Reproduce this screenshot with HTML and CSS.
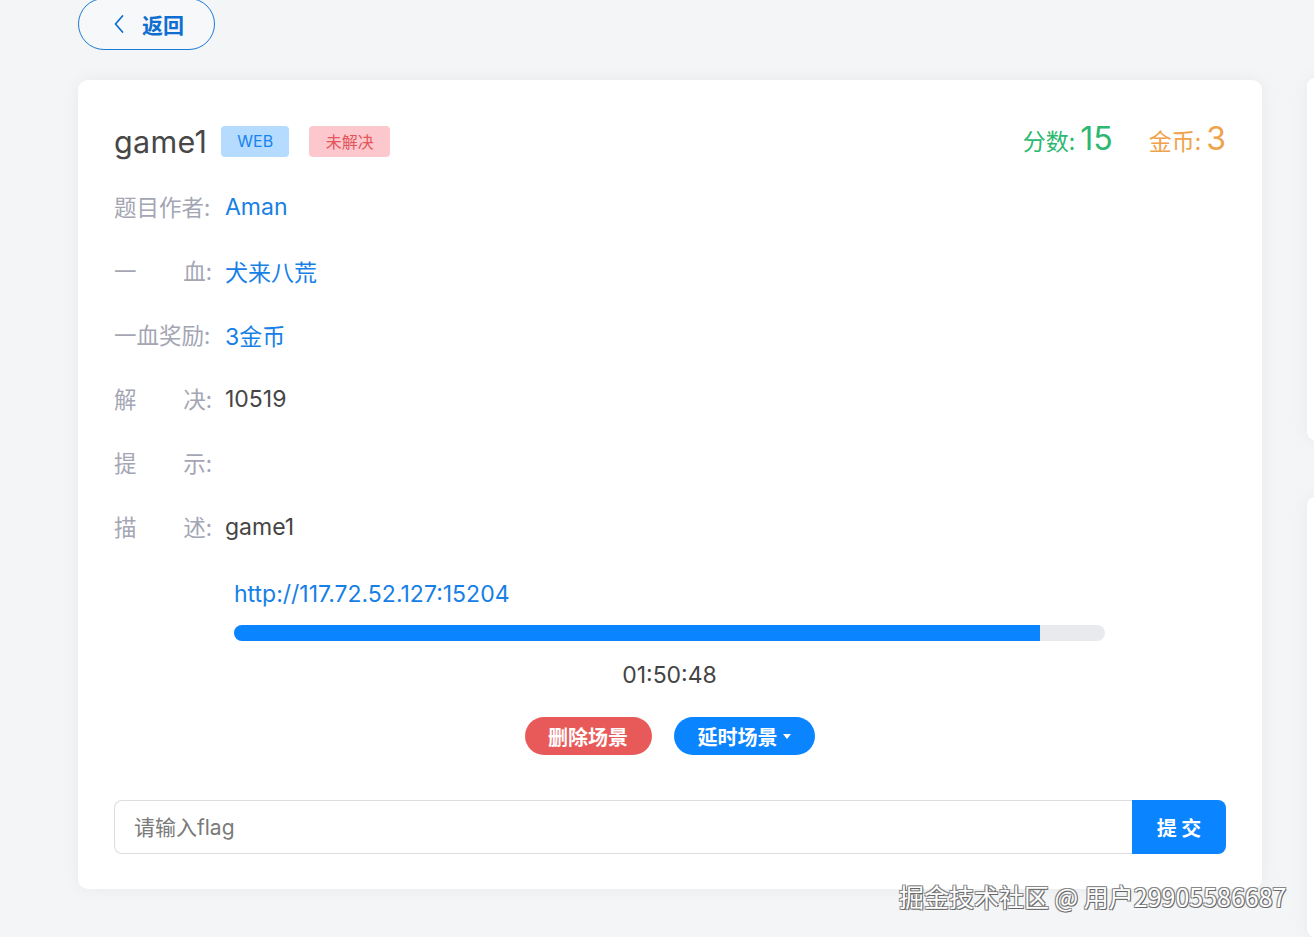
FILE: index.html
```html
<!DOCTYPE html>
<html lang="zh-CN">
<head>
<meta charset="utf-8">
<title>game1</title>
<link rel="stylesheet" href="styles.css">
</head>
<body>
<div class="page">
  <main class="main">
    <button class="back-btn" type="button">
      <svg class="chev" width="12" height="20" viewBox="0 0 12 20"><path d="M9.5 2 L2.5 10 L9.5 18" fill="none" stroke="currentColor" stroke-width="1.8" stroke-linecap="round" stroke-linejoin="round"/></svg>
      <span>返回</span>
    </button>
    <section class="card">
      <div class="head">
        <div class="title-wrap">
          <h1 class="title">game1</h1>
          <span class="tag tag-web">WEB</span>
          <span class="tag tag-unsolved">未解决</span>
        </div>
        <div class="stats">
          <span class="score">分数: <b>15</b></span>
          <span class="coin">金币: <b>3</b></span>
        </div>
      </div>
      <div class="row first"><span class="label"><span>题目作者:</span></span><span class="val blue">Aman</span></div>
      <div class="row"><span class="label"><span>一</span><span>血:</span></span><span class="val blue">犬来八荒</span></div>
      <div class="row"><span class="label"><span>一血奖励:</span></span><span class="val blue">3金币</span></div>
      <div class="row"><span class="label"><span>解</span><span>决:</span></span><span class="val">10519</span></div>
      <div class="row"><span class="label"><span>提</span><span>示:</span></span><span class="val"></span></div>
      <div class="row"><span class="label"><span>描</span><span>述:</span></span><span class="val">game1</span></div>
      <div class="scene">
        <a class="url" href="#">http://117.72.52.127:15204</a>
        <div class="bar"><div class="fill" style="width:92.5%"></div></div>
        <div class="time">01:50:48</div>
        <div class="actions">
          <button class="pill red" type="button">删除场景</button>
          <button class="pill blue-btn" type="button">延时场景<span class="caret"></span></button>
        </div>
      </div>
      <div class="submit">
        <input class="flag" type="text" placeholder="请输入flag">
        <button class="submit-btn" type="button">提 交</button>
      </div>
    </section>
  </main>
  <aside class="side">
    <div class="side-card one"></div>
    <div class="side-card two"></div>
  </aside>
</div>
<div class="watermark">掘金技术社区 @ 用户29905586687</div>
</body>
</html>
```

FILE: styles.css
```css
* { box-sizing: border-box; }
html, body { height: 100%; }
body {
  margin: 0;
  background: #f4f5f7;
  font-family: Inter, "Noto Sans", "Noto Sans CJK SC", sans-serif;
  color: #444;
  overflow: hidden;
}
.page {
  display: flex;
  gap: 45px;
  padding-left: 78px;
  height: 100%;
}
.main {
  width: 1184px;
  flex: none;
}
.back-btn {
  margin-top: -2px;
  width: 137px;
  height: 52px;
  border: 1px solid #1a7ad6;
  border-radius: 26px;
  background: #f7f8fa;
  color: #0f6fd1;
  display: flex;
  align-items: center;
  padding: 0 0 0 34px;
  gap: 17px;
  font-family: "Noto Sans CJK SC", sans-serif;
  font-size: 21px;
  font-weight: 700;
}
.chev { flex: none; }
.card {
  margin-top: 30px;
  background: #fff;
  border-radius: 10px;
  box-shadow: 0 0 18px rgba(0,0,0,0.05);
  padding: 41px 36px 35px;
}
.head {
  display: flex;
  justify-content: space-between;
  align-items: center;
  height: 40px;
}
.title-wrap { display: flex; align-items: center; }
.title {
  margin: 0 14px 0 0;
  font-size: 30.5px;
  font-weight: 400;
  color: #474747;
  letter-spacing: 0.3px;
}
.tag {
  height: 31px;
  line-height: 31px;
  border-radius: 4px;
  font-size: 16px;
  text-align: center;
}
.tag-web { width: 68px; background: #b5dbff; color: #1583f0; margin-right: 20px; }
.tag-unsolved { width: 81px; background: #fcc8cd; color: #e4545a; font-family: "Noto Sans CJK SC", sans-serif; }
.stats { display: flex; gap: 36px; align-items: baseline; font-family: "Noto Sans CJK SC", sans-serif; margin-top: -5px; }
.stats b { font-weight: 400; font-size: 32px; font-family: Inter, sans-serif; }
.score { color: #2db872; font-size: 23px; }
.coin { color: #f0a24a; font-size: 23px; }
.row {
  height: 64px;
  display: flex;
  align-items: center;
}
.row.first { margin-top: 14px; }
.label {
  width: 98px;
  display: flex;
  justify-content: space-between;
  color: #a4a6b4;
  font-size: 22.5px;
  font-family: "Noto Sans CJK SC", sans-serif;
  margin-right: 13px;
  white-space: nowrap;
  margin-top: -3px;
}
.val { font-size: 23px; color: #454545; font-family: Inter, "Noto Sans CJK SC", sans-serif; }
.val.blue { color: #1680e6; }
.scene {
  margin: 21px 121px 0 120px;
}
.url {
  display: block;
  height: 28px;
  line-height: 28px;
  font-size: 23px;
  color: #1680e6;
  text-decoration: none;
}
.bar {
  margin-top: 17px;
  height: 16px;
  background: #e9eaee;
  border-radius: 8px;
  overflow: hidden;
}
.fill { height: 100%; background: #0a84ff; }
.time {
  margin-top: 20px;
  height: 28px;
  line-height: 28px;
  text-align: center;
  font-size: 23px;
  color: #444;
}
.actions {
  margin-top: 28px;
  display: flex;
  justify-content: center;
  gap: 22px;
}
.pill {
  height: 38px;
  border: none;
  border-radius: 19px;
  color: #fff;
  font-family: "Noto Sans CJK SC", sans-serif;
  font-size: 20px;
  font-weight: 700;
  display: flex;
  align-items: center;
}
.pill.red { background: #e85a5a; width: 127px; justify-content: center; padding: 0; }
.pill.blue-btn { background: #0a84ff; width: 141px; padding: 0 0 0 24px; }
.caret {
  display: inline-block;
  margin-left: 5px;
  border-left: 4px solid transparent;
  border-right: 4px solid transparent;
  border-top: 5px solid #fff;
}
.submit {
  margin-top: 45px;
  display: flex;
  height: 54px;
}
.flag {
  flex: 1;
  height: 54px;
  border: 1px solid #dcdde0;
  border-right: none;
  border-radius: 8px 0 0 8px;
  padding: 0 19px;
  font-size: 21px;
  font-family: Inter, "Noto Sans CJK SC", sans-serif;
  color: #444;
  outline: none;
}
.flag::placeholder { color: #7a7a7a; }
.submit-btn {
  width: 94px;
  border: none;
  background: #0a84ff;
  color: #fff;
  border-radius: 0 8px 8px 0;
  font-family: "Noto Sans CJK SC", sans-serif;
  font-size: 20px;
  font-weight: 700;
}
.side {
  flex: none;
  width: 200px;
  display: flex;
  flex-direction: column;
  gap: 57px;
  padding-top: 78px;
}
.side-card {
  background: #fff;
  border-radius: 8px;
  box-shadow: 0 0 18px rgba(0,0,0,0.05);
}
.side-card.one { height: 362px; }
.side-card.two { flex: 1; }
.watermark {
  position: absolute;
  left: 899px;
  top: 878px;
  font-family: "Noto Sans CJK SC", sans-serif;
  font-size: 25px;
  color: #fff;
  text-shadow: 1px 1px 0 #666, -1px -1px 0 #888, 1px -1px 0 #888, -1px 1px 0 #888;
  white-space: nowrap;
}
```
